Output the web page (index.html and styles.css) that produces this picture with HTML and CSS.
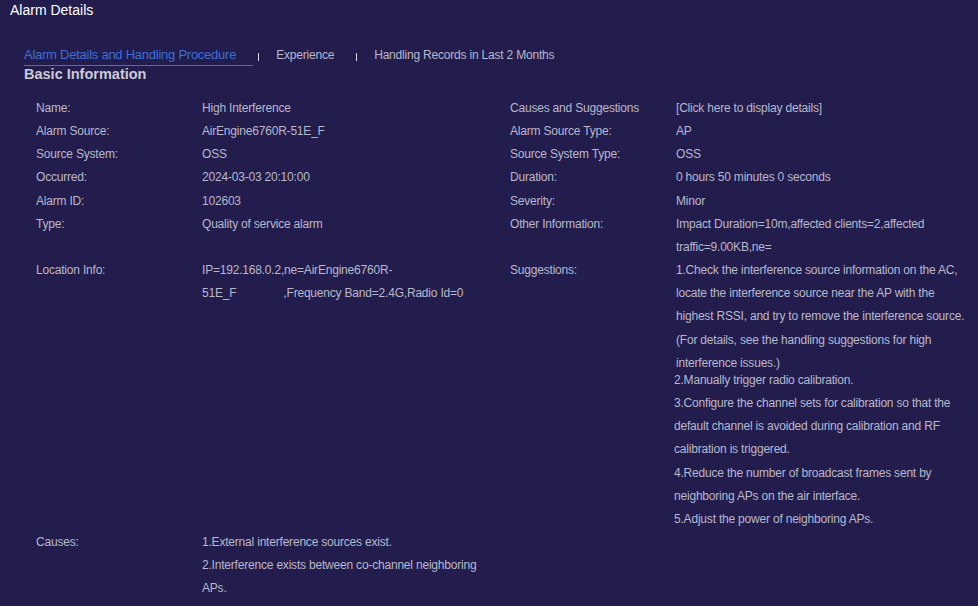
FILE: index.html
```html
<!DOCTYPE html>
<html lang="en">
<head>
  <meta charset="UTF-8" />
  <meta name="viewport" content="width=device-width, initial-scale=1.0" />
  <title>Alarm Details</title>
  <link rel="stylesheet" href="styles.css">
</head>
<body>
  <div class="page">
    <div class="page-title">Alarm Details</div>

    <!-- Tabs -->
    <div class="tabs">
      <a class="tab active">Alarm Details and Handling Procedure</a>
      <span class="tab-sep"></span>
      <a class="tab">Experience</a>
      <span class="tab-sep"></span>
      <a class="tab">Handling Records in Last 2 Months</a>
    </div>

    <h3 class="section-title">Basic Information</h3>

    <div class="info-grid">
      <div class="label">Name:</div>
      <div class="value">High Interference</div>
      <div class="label">Causes and Suggestions</div>
      <div class="value"><a class="detail-link">[Click here to display details]</a></div>

      <div class="label">Alarm Source:</div>
      <div class="value">AirEngine6760R-51E_F</div>
      <div class="label">Alarm Source Type:</div>
      <div class="value">AP</div>

      <div class="label">Source System:</div>
      <div class="value">OSS</div>
      <div class="label">Source System Type:</div>
      <div class="value">OSS</div>

      <div class="label">Occurred:</div>
      <div class="value">2024-03-03 20:10:00</div>
      <div class="label">Duration:</div>
      <div class="value">0 hours 50 minutes 0 seconds</div>

      <div class="label">Alarm ID:</div>
      <div class="value">102603</div>
      <div class="label">Severity:</div>
      <div class="value">Minor</div>

      <div class="label">Type:</div>
      <div class="value">Quality of service alarm</div>
      <div class="label">Other Information:</div>
      <div class="value">Impact Duration=10m,affected clients=2,affected traffic=9.00KB,ne=</div>

      <div class="label">Location Info:</div>
      <div class="value">IP=192.168.0.2,ne=AirEngine6760R-<wbr>51E_F&nbsp;&nbsp;&nbsp;&nbsp;&nbsp;&nbsp;&nbsp;&nbsp;&nbsp;&nbsp;&nbsp;&nbsp;&nbsp;&nbsp;&nbsp;,Frequency Band=2.4G,Radio Id=0</div>
      <div class="label">Suggestions:</div>
      <div class="value">
        <div>1.Check the interference source information on the AC, locate the interference source near the AP with the highest RSSI, and try to remove the interference source. (For details, see the handling suggestions for high interference issues.)</div>
        <div class="suggest-rest">
          <div>2.Manually trigger radio calibration.</div>
          <div>3.Configure the channel sets for calibration so that the default channel is avoided during calibration and RF calibration is triggered.</div>
          <div>4.Reduce the number of broadcast frames sent by neighboring APs on the air interface.</div>
          <div>5.Adjust the power of neighboring APs.</div>
        </div>
      </div>

      <div class="label">Causes:</div>
      <div class="value">
        <div>1.External interference sources exist.</div>
        <div>2.Interference exists between co-channel neighboring APs.</div>
      </div>
      <div class="label"></div>
      <div class="value"></div>
    </div>
  </div>
</body>
</html>
```

FILE: styles.css
```css
:root {
  --bg-color: #221d4d;
  --text-color: #b9b8cc;
  --title-color: #ffffff;
  --heading-color: #cbcbd8;
  --active-color: #3d6fd6;
}

* {
  box-sizing: border-box;
  margin: 0;
  padding: 0;
}

body {
  font-family: "Liberation Sans", Arial, sans-serif;
  background: var(--bg-color);
  color: var(--text-color);
  font-size: 12px;
  letter-spacing: -0.2px;
  width: 978px;
  height: 606px;
  overflow: hidden;
}

.page-title {
  padding: 0 10px;
  font-size: 14px;
  line-height: 20px;
  letter-spacing: 0;
  color: var(--title-color);
}

.tabs {
  display: flex;
  align-items: center;
  margin-top: 27px;
  padding-left: 24px;
}

.tab {
  padding: 0 17px 2px 0;
  line-height: 16px;
  border-bottom: 1px solid transparent;
  color: var(--text-color);
  cursor: pointer;
}

.tab.active {
  font-size: 13px;
  letter-spacing: -0.25px;
  color: var(--active-color);
  border-bottom-color: var(--active-color);
}

.tab-sep {
  width: 1px;
  height: 8px;
  margin: 0 17px 0 5px;
  background: #dcdce6;
}

.section-title {
  padding-left: 24px;
  font-size: 14.5px;
  line-height: 16px;
  font-weight: bold;
  letter-spacing: 0;
  color: var(--heading-color);
}

.info-grid {
  display: grid;
  grid-template-columns: 166px 308px 166px 1fr;
  margin-top: 15px;
  padding-left: 36px;
  line-height: 23.15px;
}

.value {
  padding-right: 10px;
}

.detail-link {
  cursor: pointer;
}

.suggest-rest {
  margin: -6px 0 0 -2px;
}
```
